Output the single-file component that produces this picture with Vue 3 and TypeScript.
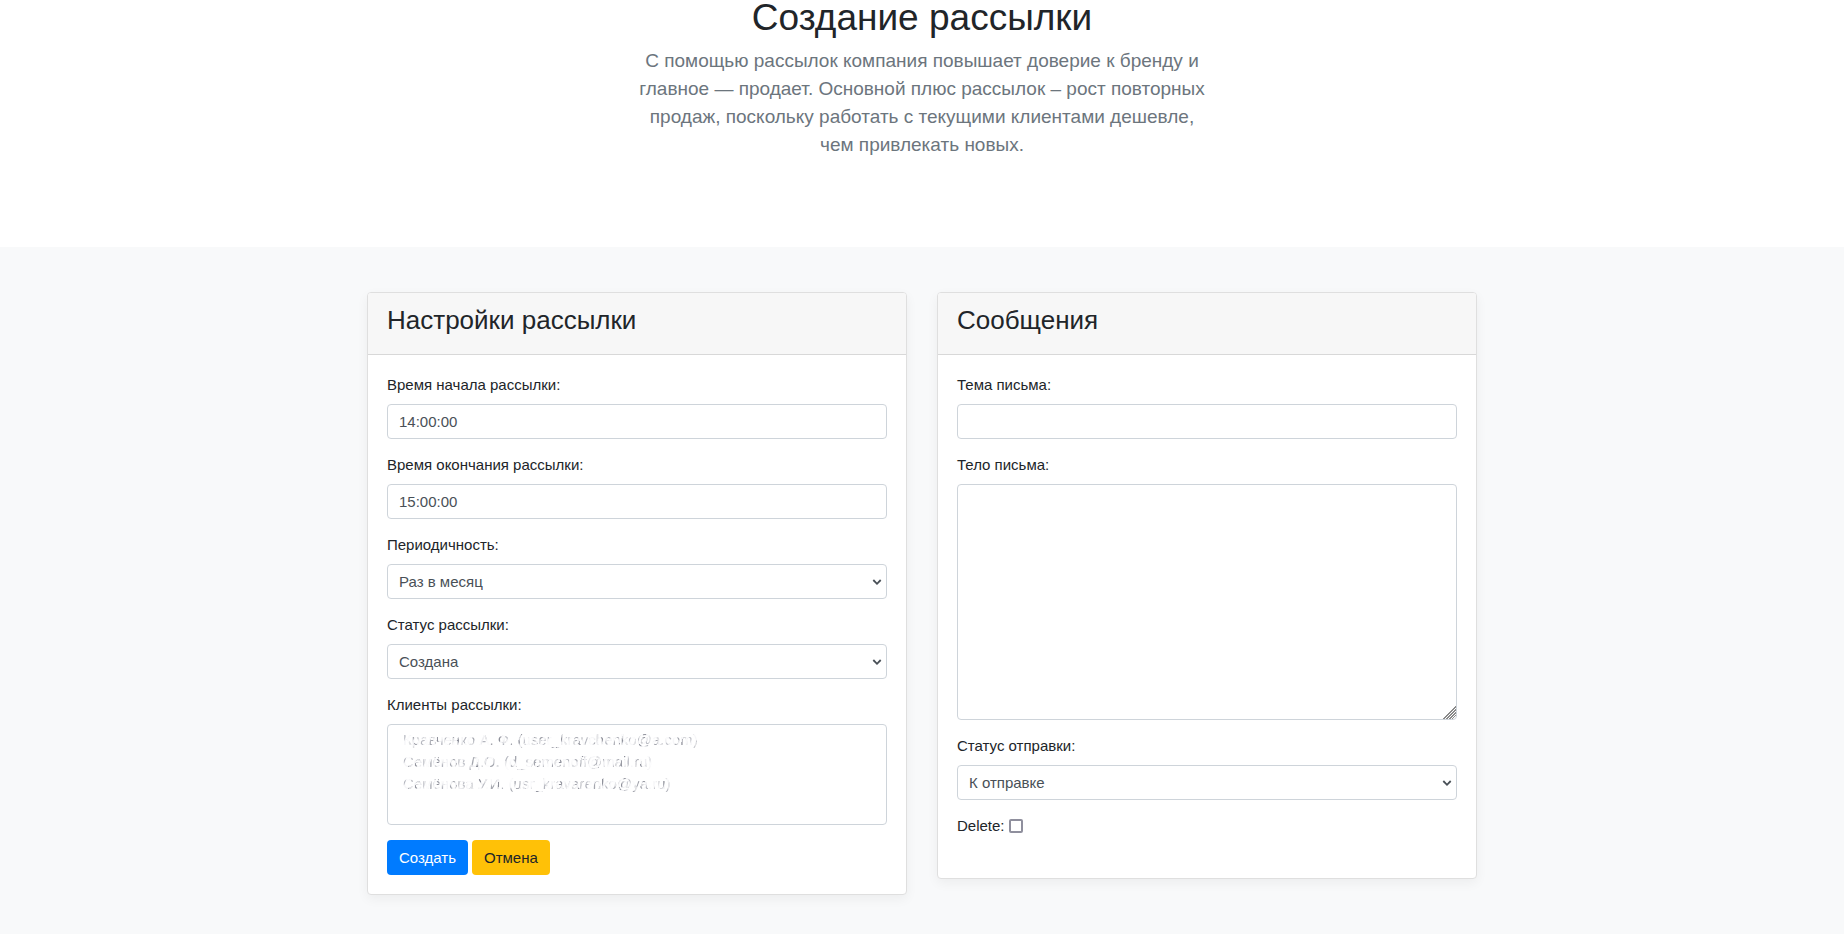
<script setup lang="ts">
import { ref } from 'vue'

const startTime = ref('14:00:00')
const endTime = ref('15:00:00')
const period = ref('Раз в месяц')
const status = ref('Создана')
const subject = ref('')
const body = ref('')
const sendStatus = ref('К отправке')
const remove = ref(false)
const clients = [
  'Кравченко А. Ф. (user_kravchenko@a.com)',
  'Семёнов Д.О. (d_semenoff@mail.ru)',
  'Семёнова У.И. (usr_kravarenko@ya.ru)',
]
</script>

<template>
  <main class="page">
    <header class="intro">
      <h1>Создание рассылки</h1>
      <p>
        С помощью рассылок компания повышает доверие к бренду и главное — продает. Основной плюс
        рассылок – рост повторных продаж, поскольку работать с текущими клиентами дешевле, чем
        привлекать новых.
      </p>
    </header>

    <section class="album">
      <form class="container" @submit.prevent>
        <section class="card">
          <h2>Настройки рассылки</h2>
          <div class="card-body">
            <div class="group">
              <label for="start">Время начала рассылки:</label>
              <input id="start" v-model="startTime" type="text" class="control" />
            </div>
            <div class="group">
              <label for="end">Время окончания рассылки:</label>
              <input id="end" v-model="endTime" type="text" class="control" />
            </div>
            <div class="group">
              <label for="period">Периодичность:</label>
              <div class="select">
                <select id="period" v-model="period" class="control">
                  <option>Раз в месяц</option>
                </select>
                <svg viewBox="0 0 10 10" aria-hidden="true"><path d="M1.3 3 5 6.8 8.7 3" /></svg>
              </div>
            </div>
            <div class="group">
              <label for="status">Статус рассылки:</label>
              <div class="select">
                <select id="status" v-model="status" class="control">
                  <option>Создана</option>
                </select>
                <svg viewBox="0 0 10 10" aria-hidden="true"><path d="M1.3 3 5 6.8 8.7 3" /></svg>
              </div>
            </div>
            <div class="group">
              <label for="clients">Клиенты рассылки:</label>
              <select id="clients" class="control clients" multiple>
                <option v-for="client in clients" :key="client">{{ client }}</option>
              </select>
            </div>
            <div class="actions">
              <button type="submit" class="primary">Создать</button>
              <button type="button" class="warning">Отмена</button>
            </div>
          </div>
        </section>

        <section class="card">
          <h2>Сообщения</h2>
          <div class="card-body">
            <div class="group">
              <label for="subject">Тема письма:</label>
              <input id="subject" v-model="subject" type="text" class="control" />
            </div>
            <div class="group">
              <label for="body">Тело письма:</label>
              <textarea id="body" v-model="body" class="control message"></textarea>
            </div>
            <div class="group">
              <label for="send">Статус отправки:</label>
              <div class="select">
                <select id="send" v-model="sendStatus" class="control">
                  <option>К отправке</option>
                </select>
                <svg viewBox="0 0 10 10" aria-hidden="true"><path d="M1.3 3 5 6.8 8.7 3" /></svg>
              </div>
            </div>
            <div class="check">
              <label for="delete">Delete:</label>
              <input id="delete" v-model="remove" type="checkbox" />
            </div>
          </div>
        </section>
      </form>
    </section>
  </main>
</template>

<style>
body {
  margin: 0;
  background: #fff;
}
</style>

<style scoped>
* {
  box-sizing: border-box;
}

.page {
  display: flex;
  flex-direction: column;
  min-height: 100vh;
  font: 15px/22px 'Liberation Sans', Arial, sans-serif;
  color: #212529;
}

.intro {
  max-width: 576px;
  margin: 0 auto;
  padding-bottom: 88px;
  text-align: center;
}

h1 {
  margin: 0 0 12px;
  font-size: 37px;
  line-height: 35px;
  font-weight: 400;
}

.intro p {
  margin: 0;
  font-size: 19px;
  line-height: 28px;
  color: #6c757d;
}

.album {
  flex: 1;
  padding: 45px 15px 39px;
  background: #f8f9fa;
}

.container {
  display: grid;
  grid-template-columns: 1fr 1fr;
  align-items: start;
  gap: 30px;
  max-width: 1110px;
  margin: 0 auto;
}

.card {
  border: 1px solid #dfdfdf;
  border-radius: 4px;
  background: #fff;
  box-shadow: 0 4px 12px rgba(0, 0, 0, 0.05);
}

h2 {
  margin: 0;
  padding: 12px 19px 18px;
  border-bottom: 1px solid #d8d8d8;
  border-radius: 3px 3px 0 0;
  background: #f7f7f7;
  font-size: 26px;
  line-height: 31px;
  font-weight: 400;
}

.card-body {
  padding: 19px;
}

.group {
  display: flex;
  flex-direction: column;
  gap: 8px;
  margin-bottom: 15px;
}

.control {
  width: 100%;
  height: 35px;
  margin: 0;
  padding: 0 11px;
  border: 1px solid #ced4da;
  border-radius: 4px;
  background: #fff;
  color: #495057;
  font: inherit;
  appearance: none;
}

.select {
  display: grid;
}

.select > * {
  grid-area: 1 / 1;
}

.select svg {
  place-self: center end;
  width: 10px;
  height: 10px;
  margin-right: 5px;
  fill: none;
  stroke: #495057;
  stroke-width: 1.8;
  pointer-events: none;
}

.clients {
  height: 101px;
  padding: 6px 11px;
  overflow: hidden;
}

/* Client names are masked: only scattered traces of the glyphs stay visible. */
.clients option {
  min-height: 22px;
  padding: 0 4px;
  background:
    repeating-linear-gradient(68deg, transparent 0 4px, rgba(255, 255, 255, 0.7) 5px 8px),
    repeating-linear-gradient(
      112deg,
      #8d8f99 0 2px,
      #eeeef1 3px 5px,
      #b4b6be 6px 8px,
      #f6f6f8 9px 13px,
      #a4a6ae 14px 16px,
      #f0f0f3 17px 19px
    );
  background-clip: text;
  color: transparent;
  line-height: 22px;
}

.message {
  display: block;
  height: 236px;
  padding: 6px 11px;
  resize: vertical;
}

.message::-webkit-resizer {
  background: linear-gradient(
    135deg,
    transparent 0 12px,
    #8a8a8a 12px 13px,
    transparent 13px 14px,
    #8a8a8a 14px 15px,
    transparent 15px 16px,
    #8a8a8a 16px 17px,
    transparent 17px 18px,
    #8a8a8a 18px 19px,
    transparent 19px
  );
}

.actions {
  display: flex;
  gap: 4px;
}

button {
  height: 35px;
  padding: 0 12px;
  border: 0;
  border-radius: 4px;
  font: inherit;
}

.primary {
  background: #007bff;
  color: #fff;
}

.warning {
  background: #ffc107;
  color: #212529;
}

.check {
  display: flex;
  align-items: center;
  gap: 4px;
  padding-bottom: 22px;
}

.check input {
  width: 14px;
  height: 14px;
  margin: 0;
  border: 2px solid #8f8f9d;
  border-radius: 2px;
  background: #fff;
  appearance: none;
}

.check input:checked {
  background: #007bff;
}
</style>
